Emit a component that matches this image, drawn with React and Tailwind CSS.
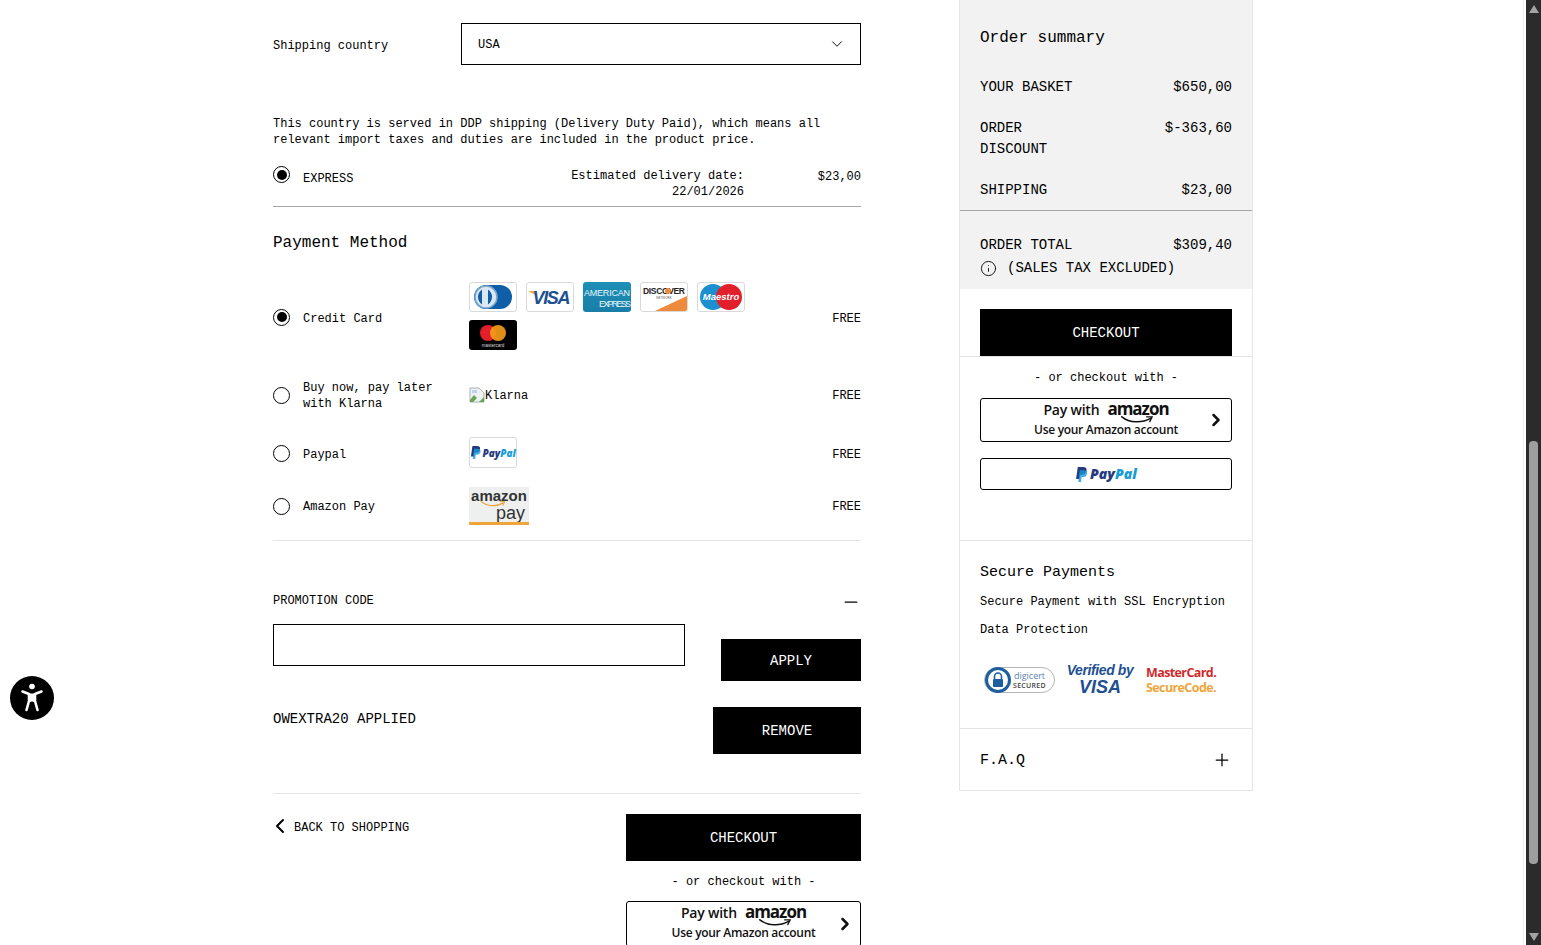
import React from 'react';
import { ChevronDown, ChevronLeft, ChevronRight, Info, Minus, Plus } from 'lucide-react';

const Radio = ({ checked }) => (
    <span className="w-[17px] h-[17px] rounded-full border-[1.5px] border-black flex items-center justify-center shrink-0 bg-white">
        {checked && <span className="w-[10px] h-[10px] rounded-full bg-black" />}
    </span>
);

const CardBox = ({ children }) => (
    <span className="w-[48px] h-[30px] rounded-[3px] border border-[#d9d9d9] bg-white overflow-hidden block">
        <svg width="46" height="28" viewBox="0 0 46 28">{children}</svg>
    </span>
);

const Diners = () => (
    <CardBox>
        <rect x="4" y="2" width="38" height="24" rx="12" fill="#0f5fa8" />
        <circle cx="16" cy="14" r="11" fill="#dbe7f2" stroke="#7ba6cc" strokeWidth="1.5" />
        <path d="M12 6.5a9 9 0 0 0 0 15zM18 6.5a9 9 0 0 1 0 15z" fill="#0f5fa8" />
    </CardBox>
);

const Visa = () => (
    <CardBox>
        <path d="M1 8h7l2 5z" fill="#f0a93a" />
        <text x="24.5" y="21" textAnchor="middle" fontFamily="'Liberation Sans', sans-serif" fontSize="18" fontWeight="700" fontStyle="italic" fill="#1d4f91" textLength="38">VISA</text>
    </CardBox>
);

const Amex = () => (
    <span className="w-[48px] h-[30px] rounded-[3px] overflow-hidden block bg-gradient-to-b from-[#1d8fb8] to-[#1a7ea6]">
        <svg width="48" height="30" viewBox="0 0 48 30">
            <text x="24" y="14" textAnchor="middle" fontFamily="'Liberation Sans', sans-serif" fontSize="9" fill="#e6f6fb" textLength="46">AMERICAN</text>
            <text x="32" y="25" textAnchor="middle" fontFamily="'Liberation Sans', sans-serif" fontSize="9" fill="#e6f6fb" textLength="32">EXPRESS</text>
        </svg>
    </span>
);

const Discover = () => (
    <CardBox>
        <path d="M14 28 46 13v15z" fill="#ee8a3c" />
        <text x="23" y="11" textAnchor="middle" fontFamily="'Liberation Sans', sans-serif" fontSize="8.5" fontWeight="700" fill="#222" textLength="42">DISCOVER</text>
        <circle cx="27" cy="8" r="3" fill="#ee8a3c" />
        <text x="23" y="16" textAnchor="middle" fontFamily="'Liberation Sans', sans-serif" fontSize="3" fill="#555">NETWORK</text>
    </CardBox>
);

const Maestro = () => (
    <CardBox>
        <circle cx="15" cy="14" r="13" fill="#1c8fd0" />
        <circle cx="31" cy="14" r="13" fill="#e2202c" />
        <text x="23" y="17" textAnchor="middle" fontFamily="'Liberation Sans', sans-serif" fontSize="9.5" fontWeight="700" fontStyle="italic" fill="#fff">Maestro</text>
    </CardBox>
);

const Mastercard = () => (
    <span className="w-[48px] h-[30px] rounded-[3px] bg-black overflow-hidden block">
        <svg width="48" height="30" viewBox="0 0 48 30">
            <circle cx="19" cy="13" r="8" fill="#e2202c" />
            <circle cx="29" cy="13" r="8" fill="#f79e1b" fillOpacity="0.9" />
            <text x="24" y="26.5" textAnchor="middle" fontFamily="'Liberation Sans', sans-serif" fontSize="4.5" fill="#ddd">mastercard</text>
        </svg>
    </span>
);

const BrokenImage = () => (
    <svg width="16" height="16" viewBox="0 0 16 16" className="shrink-0">
        <path d="M1 1h9l5 5v9H1z" fill="#eef2f7" stroke="#a9b0b8" />
        <path d="M1 13l4-5 3 3-4 4H1z" fill="#68a650" />
        <path d="M10 15l5-5v5z" fill="#68a650" />
        <path d="M3 3h5v3H3z" fill="#bcd3ee" />
    </svg>
);

const PaypalWord = ({ size }) => (
    <span className="font-['Open_Sans',sans-serif] font-extrabold italic leading-none" style={{ fontSize: size }}>
        <span className="text-[#253b80]">Pay</span><span className="text-[#179bd7]">Pal</span>
    </span>
);

const PaypalMark = ({ height }) => (
    <svg height={height} viewBox="0 0 12 14">
        <path d="M2.6 0h5c2.4 0 3.6 1.3 3.2 3.4-.5 2.6-2.2 3.8-4.6 3.8H5l-.7 4H1z" fill="#253b80" />
        <path d="M4.4 3h4.2c1.9 0 3 1.1 2.7 3-.4 2.3-1.9 3.4-4 3.4H6.2L5.6 14H3z" fill="#179bd7" fillOpacity="0.8" />
    </svg>
);

const AmazonSmile = ({ width = 44 }) => (
    <svg width={width} height={width / 5} viewBox="0 0 44 9" className="block">
        <path d="M3 1c10 8 25 8 36 2" fill="none" stroke="currentColor" strokeWidth="2" strokeLinecap="round" />
        <path d="M34 1h7l-3 6" fill="none" stroke="currentColor" strokeWidth="1.6" strokeLinecap="round" />
    </svg>
);

const AmazonPayLogo = () => (
    <span className="w-[60px] h-[38px] bg-[#eef0ef] border-b-[3px] border-[#eea63a] flex flex-col font-['Liberation_Sans',sans-serif] text-[#333] overflow-hidden relative">
        <span className="text-[15px] font-bold leading-[17px] text-center">amazon</span>
        <span className="text-[18px] leading-[18px] text-right pr-[4px]">pay</span>
        <span className="absolute left-[10px] top-[14px] text-[#e8a33d]"><AmazonSmile width={28} /></span>
    </span>
);

const AmazonButton = ({ className }) => (
    <div className={`border border-black rounded-[3px] flex items-start relative bg-white font-['Open_Sans',sans-serif] text-[#111] ${className}`}>
        <div className="flex-1 flex flex-col items-center">
            <div className="flex items-end gap-[8px] h-[19px] leading-none -mt-[1px]">
                <span className="text-[14px] font-semibold tracking-[-0.2px]">Pay with</span>
                <span className="text-[17px] font-bold tracking-[-1px]">amazon</span>
            </div>
            <div className="ml-[62px] h-[7px] -mt-[1px]"><AmazonSmile width={36} /></div>
            <div className="text-[12px] font-semibold leading-[15px] tracking-[-0.3px] -mt-[1px]">Use your Amazon account</div>
        </div>
        <ChevronRight size={20} strokeWidth={3} className="absolute right-[5px] top-1/2 -translate-y-1/2" />
    </div>
);

const PaymentRow = ({ checked, label, labelPad = 'pt-[4px]', className, children }) => (
    <div className={`flex items-center ${className}`}>
        <Radio checked={checked} />
        <span className={`ml-[13px] w-[166px] shrink-0 leading-[16px] pr-[20px] ${labelPad}`}>{label}</span>
        <div className="flex-1">{children}</div>
        <span className={labelPad}>FREE</span>
    </div>
);

const SummaryRow = ({ label, value, labelWidth = 'w-[100px]', className = '' }) => (
    <div className={`flex justify-between px-[20px] text-[14px] leading-[21px] ${className}`}>
        <span className={labelWidth}>{label}</span>
        <span>{value}</span>
    </div>
);

const Scrollbar = () => (
    <div className="w-[15px] h-[945px] bg-[#2b2b2b] shrink-0 flex flex-col items-center">
        <div className="mt-[5px] w-0 h-0 border-x-[5px] border-x-transparent border-b-[8px] border-b-[#a3a3a3]" />
        <div className="mt-[428px] w-[9px] h-[423px] rounded-[4px] bg-[#9e9e9e]" />
        <div className="mt-[69px] w-0 h-0 border-x-[5px] border-x-transparent border-t-[8px] border-t-[#a3a3a3]" />
    </div>
);

const App = () => {
    return (
        <div className="h-[945px] overflow-hidden flex bg-white text-black text-[12px] font-['Liberation_Mono',monospace] relative">
            <div className="flex-1 flex pl-[273px] items-start mr-[2px] border-r border-[#f0f0f0] h-[945px]">
                {/* Checkout form */}
                <main className="w-[588px] shrink-0 h-[945px] overflow-hidden pt-[23px]">
                    <div className="flex items-center">
                        <span className="w-[188px] pt-[4px]">Shipping country</span>
                        <div className="w-[400px] h-[42px] border border-black flex items-center justify-between pl-[16px] pr-[14px]">
                            <span className="pt-[2px]">USA</span>
                            <ChevronDown size={18} strokeWidth={1.25} />
                        </div>
                    </div>

                    <p className="mt-[51px] leading-[16px]">
                        This country is served in DDP shipping (Delivery Duty Paid), which means all<br />
                        relevant import taxes and duties are included in the product price.
                    </p>

                    <div className="mt-[12px] h-[47px] flex items-start border-b border-[#a6a6a6]">
                        <span className="mt-[6px]"><Radio checked /></span>
                        <span className="ml-[13px] mt-[10px]">EXPRESS</span>
                        <span className="ml-auto mt-[8px] text-right leading-[16px]">Estimated delivery date:<br />22/01/2026</span>
                        <span className="w-[117px] mt-[8px] text-right">$23,00</span>
                    </div>

                    <h2 className="text-[16px] leading-[20px] mt-[26px]">Payment Method</h2>

                    <PaymentRow checked label="Credit Card" className="mt-[29px] h-[70px]">
                        <div className="flex flex-wrap gap-x-[9px] gap-y-[8px] w-[285px] -mt-[2px]">
                            <Diners />
                            <Visa />
                            <Amex />
                            <Discover />
                            <Maestro />
                            <Mastercard />
                        </div>
                    </PaymentRow>
                    <PaymentRow label="Buy now, pay later with Klarna" labelPad="pt-[2px]" className="mt-[27px] h-[32px]">
                        <div className="flex items-center"><BrokenImage /><span className="pt-[2px]">Klarna</span></div>
                    </PaymentRow>
                    <PaymentRow label="Paypal" className="mt-[26px] h-[32px]">
                        <div className="w-[48px] h-[31px] border border-[#d9d9d9] rounded-[3px] flex items-center justify-center gap-[1px] -mt-[1px]">
                            <PaypalMark height={13} />
                            <PaypalWord size={10} />
                        </div>
                    </PaymentRow>
                    <PaymentRow label="Amazon Pay" labelPad="pt-[2px]" className="mt-[18px] h-[38px]">
                        <AmazonPayLogo />
                    </PaymentRow>

                    <div className="mt-[15px] border-t border-[#e5e5e5] pt-[53px]">
                        <div className="flex justify-between items-center h-[14px]">
                            <span>PROMOTION CODE</span>
                            <Minus size={20} strokeWidth={1.5} className="mt-[2px]" />
                        </div>
                    </div>
                    <div className="flex justify-between items-end mt-[16px]">
                        <div className="w-[412px] h-[42px] border border-black mb-[15px]" />
                        <button className="w-[140px] h-[42px] bg-black text-white text-[14px] pt-[2px]">APPLY</button>
                    </div>
                    <div className="flex justify-between items-start mt-[26px] h-[87px] border-b border-[#e5e5e5]">
                        <span className="text-[14px] leading-[21px] mt-[2px]">OWEXTRA20 APPLIED</span>
                        <button className="w-[148px] h-[47px] bg-black text-white text-[14px] pt-[2px]">REMOVE</button>
                    </div>
                    <div className="flex justify-between items-start mt-[20px]">
                        <div className="flex items-center mt-[3px] h-[20px]">
                            <ChevronLeft size={24} strokeWidth={2} className="-ml-[5px] -my-[2px] -mt-[4px]" />
                            <span className="ml-[2px] pt-[2px]">BACK TO SHOPPING</span>
                        </div>
                        <div className="w-[235px]">
                            <button className="w-full h-[47px] bg-black text-white text-[14px] pt-[2px]">CHECKOUT</button>
                            <p className="text-center mt-[13px] leading-[16px]">- or checkout with -</p>
                            <AmazonButton className="mt-[11px] h-[46px]" />
                        </div>
                    </div>
                </main>

                {/* Order summary */}
                <aside className="ml-[98px] w-[294px] h-[791px] shrink-0 border-x border-b border-[#e5e5e5]">
                    <div className="bg-[#f2f2f2] h-[289px] pt-[28px]">
                        <h2 className="text-[16px] leading-[20px] px-[20px]">Order summary</h2>
                        <SummaryRow label="YOUR BASKET" value="$650,00" labelWidth="w-[120px]" className="mt-[29px]" />
                        <SummaryRow label="ORDER DISCOUNT" value="$-363,60" className="mt-[20px]" />
                        <SummaryRow label="SHIPPING" value="$23,00" className="mt-[20px]" />
                        <div className="border-t border-[#a6a6a6] mt-[9px]" />
                        <SummaryRow label="ORDER TOTAL" value="$309,40" labelWidth="w-[120px]" className="mt-[24px]" />
                        <div className="flex items-center px-[20px] text-[14px] leading-[21px] mt-[2px]">
                            <Info size={17} strokeWidth={1.25} className="mr-[10px]" />
                            <span>(SALES TAX EXCLUDED)</span>
                        </div>
                    </div>
                    <div className="px-[20px] pt-[20px] border-b border-[#e5e5e5]">
                        <button className="w-full h-[47px] bg-black text-white text-[14px] block pt-[2px]">CHECKOUT</button>
                    </div>
                    <div className="px-[20px] pt-[13px] h-[184px] border-b border-[#e5e5e5]">
                        <p className="text-center leading-[16px]">- or checkout with -</p>
                        <AmazonButton className="mt-[12px] h-[44px]" />
                        <div className="mt-[16px] h-[32px] border border-black rounded-[3px] flex items-center justify-center gap-[2px]">
                            <PaypalMark height={15} />
                            <PaypalWord size={14} />
                        </div>
                    </div>
                    <div className="px-[20px] h-[188px] border-b border-[#e5e5e5] pt-[22px]">
                        <h3 className="text-[15px] leading-[20px]">Secure Payments</h3>
                        <p className="leading-[28px] mt-[5px]">Secure Payment with SSL Encryption</p>
                        <p className="leading-[28px]">Data Protection</p>
                        <div className="flex items-center mt-[20px] ml-[4px] h-[32px] font-['Open_Sans',sans-serif]">
                            <div className="w-[71px] h-[26px] border border-[#b5b5b5] rounded-full flex items-center">
                                <svg width="28" height="28" viewBox="0 0 28 28" className="shrink-0 -ml-[1px]">
                                    <circle cx="14" cy="14" r="11.5" fill="#fff" stroke="#1d5f9e" strokeWidth="3" />
                                    <path d="M10.5 13v-2.5a3.5 3.5 0 0 1 7 0V13" fill="none" stroke="#1d5f9e" strokeWidth="1.6" />
                                    <rect x="9" y="13" width="10" height="8" rx="1" fill="#1d5f9e" />
                                </svg>
                                <div className="flex flex-col items-center ml-[1px]">
                                    <span className="text-[9px] leading-[10px] text-[#5b83ad]">digicert</span>
                                    <span className="text-[7px] leading-[9px] font-semibold text-[#444] tracking-[0.3px]">SECURED</span>
                                </div>
                            </div>
                            <div className="ml-[10px] w-[70px] flex flex-col items-center text-[#1d4f91] font-['Liberation_Sans',sans-serif]">
                                <span className="text-[14px] leading-[15px] font-bold italic tracking-[-0.4px] whitespace-nowrap">Verified by</span>
                                <span className="text-[18px] leading-[19px] font-bold italic">VISA</span>
                            </div>
                            <div className="ml-[11px] flex flex-col text-[12.5px] leading-[15px] font-bold tracking-[-0.6px] whitespace-nowrap">
                                <span className="text-[#cf2b2b]">MasterCard.</span>
                                <span className="text-[#eea63a]">SecureCode.</span>
                            </div>
                        </div>
                    </div>
                    <div className="px-[20px] h-[60px] flex items-center justify-between">
                        <span className="text-[15px] pt-[4px]">F.A.Q</span>
                        <Plus size={20} strokeWidth={1.5} className="mt-[1px]" />
                    </div>
                </aside>
            </div>

            <Scrollbar />

            {/* Accessibility widget */}
            <div className="absolute left-[10px] top-[676px] w-[44px] h-[44px] rounded-full bg-black flex items-center justify-center">
                <svg width="30" height="34" viewBox="0 0 30 34">
                    <circle cx="15" cy="5.5" r="2.8" fill="#fff" />
                    <path d="M5.5 10.5 12 13V20L9.5 29M24.5 10.5 18 13V20L20.5 29M12 20 15 19 18 20" fill="none" stroke="#fff" strokeWidth="2.6" strokeLinecap="round" strokeLinejoin="round" />
                    <path d="M12 12.5h6V20h-6z" fill="#fff" />
                </svg>
            </div>
        </div>
    );
};

export default App;
